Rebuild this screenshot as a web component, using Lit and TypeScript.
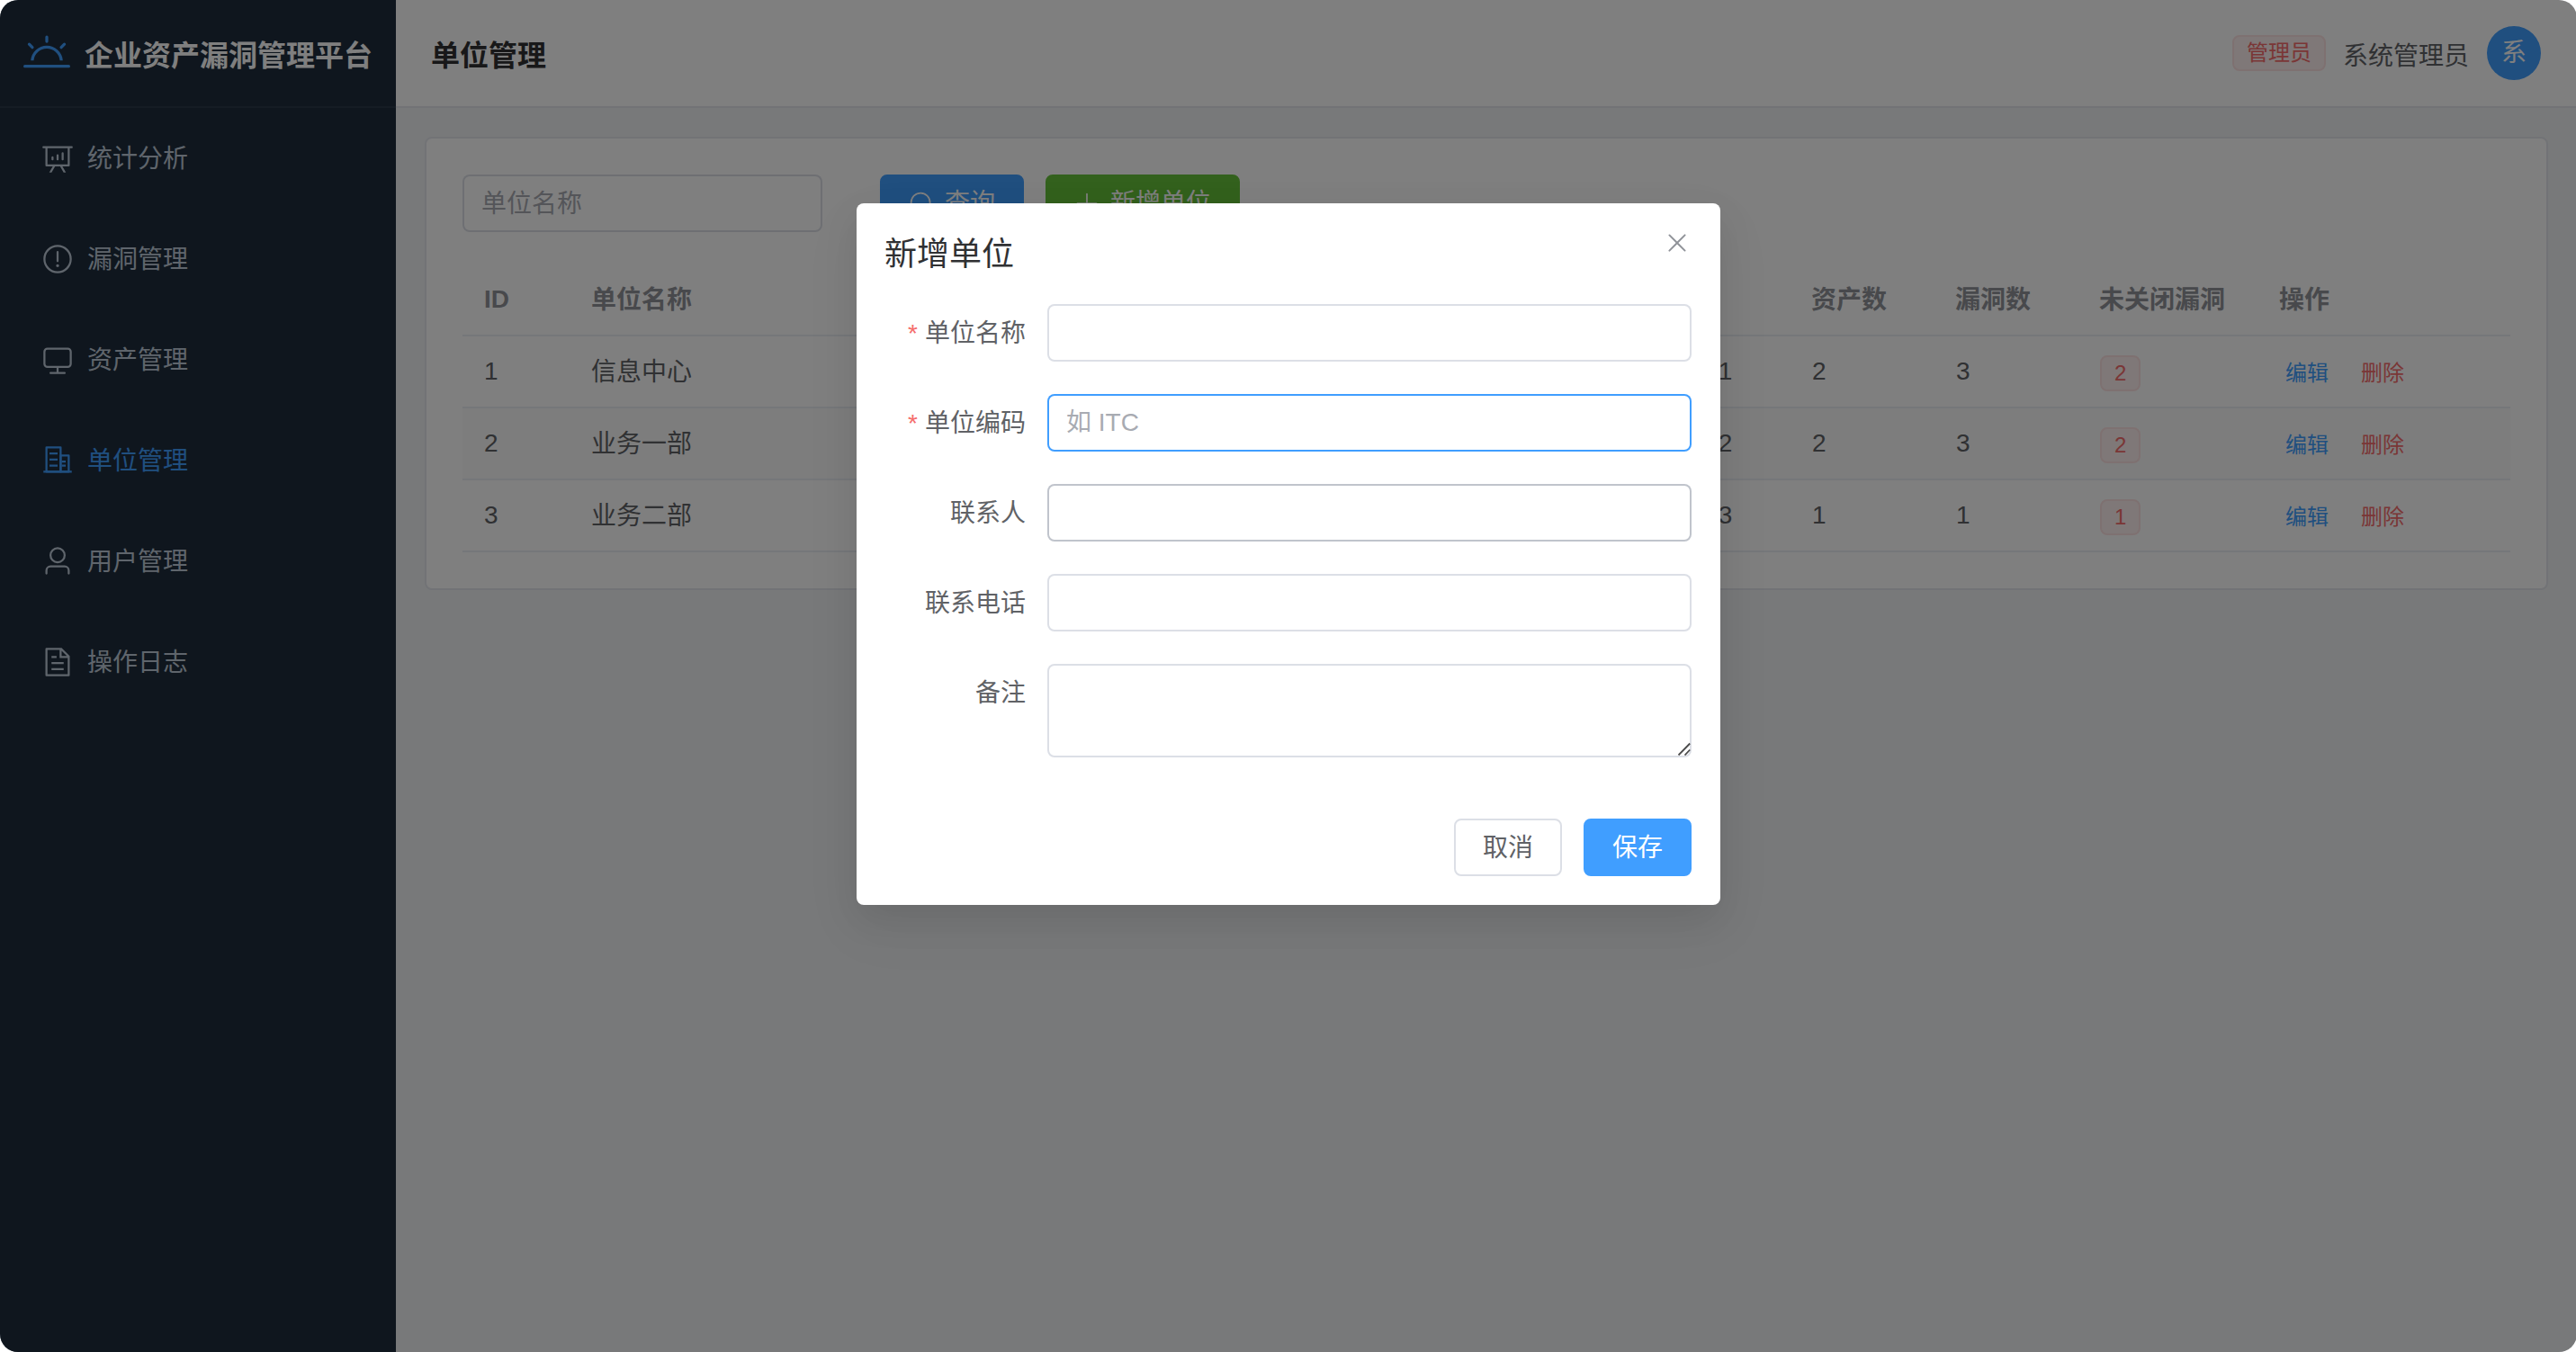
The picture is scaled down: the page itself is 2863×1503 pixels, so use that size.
import { LitElement, html, css, svg } from "lit";
import { customElement } from "lit/decorators.js";
import { classMap } from "lit/directives/class-map.js";

const ICONS: Record<string, string[]> = {
  sunrise: ["M32 768h960a32 32 0 1 1 0 64H32a32 32 0 1 1 0-64m129.408-96a352 352 0 0 1 701.184 0h-64.32a288 288 0 0 0-572.544 0zM512 128a32 32 0 0 1 32 32v96a32 32 0 0 1-64 0v-96a32 32 0 0 1 32-32m407.296 168.704a32 32 0 0 1 0 45.248l-67.84 67.84a32 32 0 1 1-45.248-45.248l67.84-67.84a32 32 0 0 1 45.248 0m-814.592 0a32 32 0 0 1 45.248 0l67.84 67.84a32 32 0 1 1-45.248 45.248l-67.84-67.84a32 32 0 0 1 0-45.248"],
  analysis: ["m665.216 768 110.848 192h-73.856L591.36 768H433.024L322.176 960H248.32l110.848-192H160a32 32 0 0 1-32-32V192H64a32 32 0 0 1 0-64h896a32 32 0 1 1 0 64h-64v544a32 32 0 0 1-32 32zM832 192H192v512h640zM352 448a32 32 0 0 1 32 32v64a32 32 0 0 1-64 0v-64a32 32 0 0 1 32-32m160-64a32 32 0 0 1 32 32v128a32 32 0 0 1-64 0V416a32 32 0 0 1 32-32m160-64a32 32 0 0 1 32 32v192a32 32 0 1 1-64 0V352a32 32 0 0 1 32-32"],
  warning: ["M512 64a448 448 0 1 1 0 896 448 448 0 0 1 0-896m0 832a384 384 0 0 0 0-768 384 384 0 0 0 0 768m48-176a48 48 0 1 1-96 0 48 48 0 0 1 96 0m-48-464a32 32 0 0 1 32 32v288a32 32 0 0 1-64 0V288a32 32 0 0 1 32-32"],
  monitor: ["M544 768v128h192a32 32 0 1 1 0 64H288a32 32 0 1 1 0-64h192V768H192A128 128 0 0 1 64 640V256a128 128 0 0 1 128-128h640a128 128 0 0 1 128 128v384a128 128 0 0 1-128 128zM192 192a64 64 0 0 0-64 64v384a64 64 0 0 0 64 64h640a64 64 0 0 0 64-64V256a64 64 0 0 0-64-64z"],
  building: [
    "M192 128v704h384V128zm-32-64h448a32 32 0 0 1 32 32v768a32 32 0 0 1-32 32H160a32 32 0 0 1-32-32V96a32 32 0 0 1 32-32",
    "M256 256h256v64H256zm0 192h256v64H256zm0 192h256v64H256zm384-128h128v64H640zm0 128h128v64H640zM64 832h896v64H64z",
    "M640 384v448h192V384zm-32-64h256a32 32 0 0 1 32 32v512a32 32 0 0 1-32 32H608a32 32 0 0 1-32-32V352a32 32 0 0 1 32-32",
  ],
  user: ["M512 512a192 192 0 1 0 0-384 192 192 0 0 0 0 384m0 64a256 256 0 1 1 0-512 256 256 0 0 1 0 512m320 320v-96a96 96 0 0 0-96-96H288a96 96 0 0 0-96 96v96a32 32 0 1 1-64 0v-96a160 160 0 0 1 160-160h448a160 160 0 0 1 160 160v96a32 32 0 1 1-64 0"],
  document: ["M832 384H576V128H192v768h640zm-26.496-64L640 154.496V320zM160 64h480l256 256v608a32 32 0 0 1-32 32H160a32 32 0 0 1-32-32V96a32 32 0 0 1 32-32m160 448h384v64H320zm0-192h160v64H320zm0 384h384v64H320z"],
  search: ["m795.904 750.72 124.992 124.928a32 32 0 0 1-45.248 45.248L750.656 795.904a416 416 0 1 1 45.248-45.248zM480 832a352 352 0 1 0 0-704 352 352 0 0 0 0 704"],
  plus: ["M480 480V128a32 32 0 0 1 64 0v352h352a32 32 0 1 1 0 64H544v352a32 32 0 1 1-64 0V544H128a32 32 0 0 1 0-64z"],
  close: ["M764.288 214.592 512 466.88 259.712 214.592a31.936 31.936 0 0 0-45.12 45.12L466.752 512 214.528 764.224a31.936 31.936 0 1 0 45.12 45.184L512 557.184l252.288 252.288a31.936 31.936 0 0 0 45.12-45.12L557.12 512.064l252.288-252.352a31.936 31.936 0 1 0-45.12-45.184z"],
};

const icon = (name: string) => html`
  <svg class="icon" viewBox="0 0 1024 1024" fill="currentColor" aria-hidden="true">
    ${ICONS[name].map((d) => svg`<path d=${d}></path>`)}
  </svg>`;

const MENU = [
  { icon: "analysis", label: "统计分析" },
  { icon: "warning", label: "漏洞管理" },
  { icon: "monitor", label: "资产管理" },
  { icon: "building", label: "单位管理", active: true },
  { icon: "user", label: "用户管理" },
  { icon: "document", label: "操作日志" },
];

const HEADERS = ["ID", "单位名称", "单位编码", "联系人", "联系电话", "资产数", "漏洞数", "未关闭漏洞", "操作"];

const UNITS = [
  { id: 1, name: "信息中心", phone: "13800000001", assets: 2, vulns: 3, open: 2 },
  { id: 2, name: "业务一部", phone: "13800000002", assets: 2, vulns: 3, open: 2 },
  { id: 3, name: "业务二部", phone: "13800000003", assets: 1, vulns: 1, open: 1 },
];

const FIELDS = [
  { label: "单位名称", required: true },
  { label: "单位编码", required: true, placeholder: "如 ITC", state: "focus" },
  { label: "联系人", state: "hover" },
  { label: "联系电话" },
  { label: "备注", area: true },
];

@customElement("app-root")
export class AppRoot extends LitElement {
  static styles = css`
    :host {
      display: block;
      width: 100%;
      height: 100vh;
      overflow: hidden;
      background: #fff;
      font-family: "Liberation Sans", "Noto Sans CJK SC", sans-serif;
      font-size: 28px;
      color: #606266;
    }
    * {
      box-sizing: border-box;
    }
    .icon {
      display: block;
      width: 1em;
      height: 1em;
      flex: none;
    }
    .window {
      position: relative;
      width: 2864px;
      height: 100vh;
      overflow: hidden;
      border-radius: 20px;
      display: flex;
      background: #f0f2f5;
    }
    .sidebar {
      width: 440px;
      flex: none;
      background: #1f2d3d;
    }
    .brand {
      height: 120px;
      display: flex;
      align-items: center;
      justify-content: center;
      gap: 16px;
      border-bottom: 2px solid #2b3849;
      color: #fff;
      font-size: 32px;
      font-weight: 700;
      white-space: nowrap;
    }
    .brand .icon {
      font-size: 52px;
      color: #409eff;
    }
    .item {
      height: 112px;
      display: flex;
      align-items: center;
      gap: 15px;
      padding-left: 46px;
      line-height: 28px;
      color: #bfcbd9;
    }
    .item span {
      padding-top: 2px;
    }
    .item .icon {
      font-size: 36px;
    }
    .item.active {
      color: #409eff;
    }
    .content {
      flex: 1;
      min-width: 0;
      display: flex;
      flex-direction: column;
    }
    .topbar {
      height: 120px;
      display: flex;
      align-items: center;
      gap: 20px;
      padding: 0 40px 0 39px;
      background: #fff;
      border-bottom: 2px solid #e4e7ed;
    }
    .title {
      margin-right: auto;
      font-size: 32px;
      font-weight: 700;
      color: #303133;
    }
    .username {
      padding-top: 2px;
      text-indent: -1px;
    }
    .tag {
      display: inline-flex;
      align-items: center;
      height: 40px;
      padding: 0 14px;
      border: 2px solid #fde2e2;
      border-radius: 8px;
      background: #fef0f0;
      color: #f56c6c;
      font-size: 24px;
      line-height: 24px;
    }
    .topbar .tag {
      width: 104px;
    }
    .avatar {
      width: 60px;
      height: 60px;
      border-radius: 50%;
      display: flex;
      align-items: center;
      justify-content: center;
      background: #409eff;
      color: #fff;
      line-height: 28px;
    }
    .card {
      margin: 32px;
      padding: 40px;
      background: #fff;
      border: 2px solid #e4e7ed;
      border-radius: 8px;
    }
    .filters {
      display: flex;
      margin-bottom: 36px;
    }
    .input {
      height: 64px;
      padding: 0 21px;
      display: flex;
      align-items: center;
      border: 0;
      border-radius: 8px;
      background: #fff;
      box-shadow: 0 0 0 2px #dcdfe6 inset;
      color: #a8abb2;
      line-height: 28px;
    }
    .filters .input {
      width: 400px;
      margin-right: 64px;
      padding-top: 2px;
    }
    .input.focus {
      box-shadow: 0 0 0 2px #409eff inset;
    }
    .input.hover {
      box-shadow: 0 0 0 2px #c0c4cc inset;
    }
    .btn {
      height: 64px;
      padding: 0 30px;
      display: inline-flex;
      align-items: center;
      gap: 12px;
      border: 2px solid #dcdfe6;
      border-radius: 8px;
      background: #fff;
      color: #606266;
      font: inherit;
      line-height: 28px;
    }
    .btn + .btn {
      margin-left: 24px;
    }
    .btn.primary {
      background: #409eff;
      border-color: #409eff;
      color: #fff;
    }
    .btn.success {
      background: #67c23a;
      border-color: #67c23a;
      color: #fff;
    }
    .row {
      display: grid;
      grid-template-columns: 120px 1fr 300px 300px 260px 160px 160px 200px 280px;
      height: 80px;
      border-bottom: 2px solid #ebeef5;
    }
    .row.head {
      font-weight: 700;
      color: #909399;
    }
    .row.striped {
      background: #fafafa;
    }
    .cell {
      padding: 16px 24px;
      line-height: 46px;
      white-space: nowrap;
    }
    .cell.name,
    .head .cell:not(:first-child) {
      padding: 17px 24px 15px 23px;
    }
    .cell.tagged {
      padding-top: 21px;
      line-height: 0;
    }
    .cell.links {
      display: flex;
      gap: 36px;
      padding: 18px 30px 14px;
      font-size: 24px;
    }
    .edit {
      color: #409eff;
    }
    .remove {
      color: #f56c6c;
    }
    .overlay {
      position: absolute;
      inset: 0;
      padding-top: 226px;
      background: rgba(0, 0, 0, 0.5);
    }
    .dialog {
      position: relative;
      width: 960px;
      margin: 0 auto;
      padding: 32px;
      border-radius: 8px;
      background: #fff;
      box-shadow: 0 24px 64px 8px rgba(0, 0, 0, 0.04), 0 16px 40px rgba(0, 0, 0, 0.08);
    }
    .heading {
      height: 80px;
      padding-top: 1px;
      font-size: 36px;
      line-height: 48px;
      text-indent: -1px;
      color: #303133;
    }
    .close {
      position: absolute;
      top: 28px;
      right: 32px;
      font-size: 32px;
      color: #909399;
    }
    .field {
      display: flex;
      margin-bottom: 36px;
    }
    .label {
      width: 180px;
      height: 64px;
      padding: 1px 24px 0 0;
      line-height: 64px;
      text-align: right;
      white-space: nowrap;
    }
    .required::before {
      content: "*";
      margin-right: 8px;
      color: #f56c6c;
    }
    .field .input {
      flex: 1;
    }
    .field .area {
      position: relative;
      height: 104px;
    }
    .grip {
      position: absolute;
      right: 0;
      bottom: 2px;
      width: 16px;
      height: 16px;
    }
    .footer {
      display: flex;
      justify-content: flex-end;
      padding-top: 32px;
    }
    .footer .btn {
      padding-top: 2px;
    }
  `;

  private renderField(f: { label: string; required?: boolean; placeholder?: string; state?: string; area?: boolean }) {
    const box = { input: true, focus: f.state === "focus", hover: f.state === "hover", area: !!f.area };
    return html`<div class="field">
      <div class=${classMap({ label: true, required: !!f.required })}>${f.label}</div>
      <div class=${classMap(box)}>
        ${f.placeholder ?? ""}
        ${f.area
          ? html`<svg class="grip" viewBox="0 0 16 16" fill="none" stroke="#4a4a4a" stroke-width="1.8">
              <path d="M1.5 15.5 14.2 2.5M8.5 15.5 14.2 9.5"></path>
            </svg>`
          : ""}
      </div>
    </div>`;
  }

  render() {
    return html`<div class="window">
      <aside class="sidebar">
        <div class="brand">${icon("sunrise")}<span>企业资产漏洞管理平台</span></div>
        ${MENU.map(
          (m) => html`<div class=${classMap({ item: true, active: !!m.active })}>${icon(m.icon)}<span>${m.label}</span></div>`
        )}
      </aside>
      <div class="content">
        <header class="topbar">
          <div class="title">单位管理</div>
          <span class="tag">管理员</span>
          <span class="username">系统管理员</span>
          <div class="avatar">系</div>
        </header>
        <main class="card">
          <div class="filters">
            <div class="input">单位名称</div>
            <button class="btn primary">${icon("search")}<span>查询</span></button>
            <button class="btn success">${icon("plus")}<span>新增单位</span></button>
          </div>
          <div class="row head">${HEADERS.map((h) => html`<div class="cell">${h}</div>`)}</div>
          ${UNITS.map(
            (u, i) => html`<div class=${classMap({ row: true, striped: i % 2 === 1 })}>
              <div class="cell">${u.id}</div>
              <div class="cell name">${u.name}</div>
              <div class="cell"></div>
              <div class="cell"></div>
              <div class="cell">${u.phone}</div>
              <div class="cell">${u.assets}</div>
              <div class="cell">${u.vulns}</div>
              <div class="cell tagged"><span class="tag">${u.open}</span></div>
              <div class="cell links"><span class="edit">编辑</span><span class="remove">删除</span></div>
            </div>`
          )}
        </main>
      </div>
      <div class="overlay">
        <section class="dialog">
          <div class="heading">新增单位</div>
          <div class="close">${icon("close")}</div>
          ${FIELDS.map((f) => this.renderField(f))}
          <div class="footer">
            <button class="btn">取消</button>
            <button class="btn primary">保存</button>
          </div>
        </section>
      </div>
    </div>`;
  }
}
